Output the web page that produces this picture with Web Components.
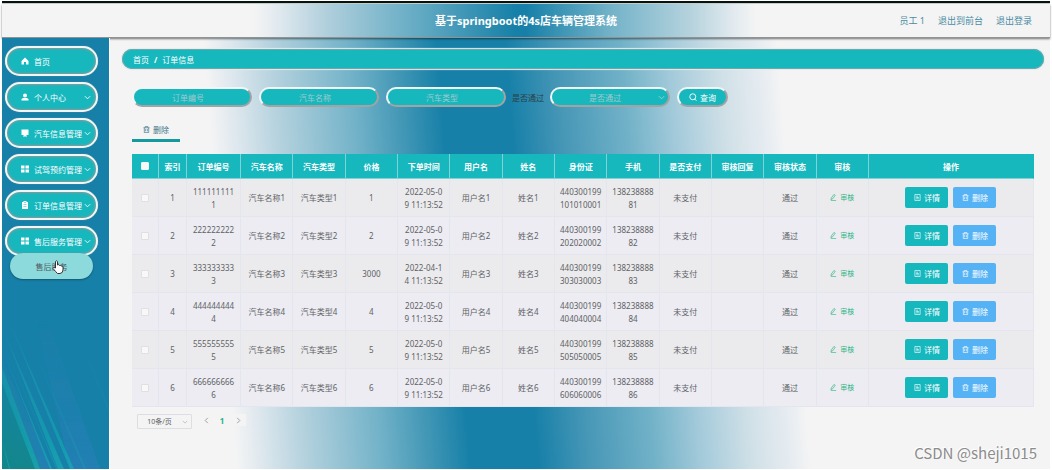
<!DOCTYPE html>
<html lang="zh-CN">
<head>
<meta charset="utf-8">
<title>基于springboot的4s店车辆管理系统</title>
<style>
  html, body { margin: 0; }
  body {
    background: #fff;
    color: #606266;
    font: 8px/13px "Noto Sans", "Noto Sans CJK SC", sans-serif;
    --teal: #17b7be;
    --blue: #1780a8;
    --page: #f4f4f4;
  }
</style>
</head>
<body>
<app-shell>
  <app-header slot="header" heading="基于springboot的4s店车辆管理系统"></app-header>
  <side-menu slot="side">
    <menu-item icon="home">首页</menu-item>
    <menu-item icon="user" expandable>个人中心</menu-item>
    <menu-item icon="monitor" expandable>汽车信息管理</menu-item>
    <menu-item icon="grid" expandable>试驾预约管理</menu-item>
    <menu-item icon="clipboard" expandable>订单信息管理</menu-item>
    <menu-item icon="grid" expandable>售后服务管理</menu-item>
    <sub-item>售后服务</sub-item>
  </side-menu>
  <bread-crumb current="订单信息">首页</bread-crumb>
  <filter-bar></filter-bar>
  <tool-tabs>删除</tool-tabs>
  <order-table></order-table>
  <page-nav></page-nav>
  <water-mark slot="mark">CSDN @sheji1015</water-mark>
</app-shell>

<script>
const ICONS = {
  home: '<path fill="currentColor" d="M8 1 1 8v7h5v-5h4v5h5V8z"/>',
  user: '<circle fill="currentColor" cx="8" cy="5" r="4"/><path fill="currentColor" d="M1 15v-2q0-3 4-3h6q4 0 4 3v2z"/>',
  monitor: '<path fill="currentColor" d="M1 1h14v11H1zM6 12h4v1h2v2H4v-2h2z"/>',
  grid: '<path fill="currentColor" d="M0 1h7v6H0zM9 1h7v6H9zM0 9h7v6H0zM9 9h7v6H9z"/>',
  clipboard: '<path fill="currentColor" fill-rule="evenodd" d="M2 2h3V0h6v2h3v14H2zM6 2v1h4V2zM5 7v1h6V7zM5 10v1h6v-1z"/>',
  down: '<path fill="none" stroke="currentColor" stroke-width="2" d="m2 5 6 6 6-6"/>',
  left: '<path fill="none" stroke="currentColor" stroke-width="2" d="m11 2-6 6 6 6"/>',
  right: '<path fill="none" stroke="currentColor" stroke-width="2" d="m5 2 6 6-6 6"/>',
  search: '<g fill="none" stroke="currentColor" stroke-width="1.8"><circle cx="7.500" cy="7.500" r="6"/><path d="m11 12 4 3"/></g>',
  trash: '<path fill="none" stroke="currentColor" stroke-width="1.500" d="M1 4h14M5 4V1h6v3M3 4v11h10V4M6 7v5M10 7v5"/>',
  doc: '<path fill="none" stroke="currentColor" stroke-width="1.500" d="M2 1h12v14H2zM5 5h4M5 8h6M5 11h6"/>',
  edit: '<path fill="none" stroke="currentColor" stroke-width="1.500" d="m3 9 6-8 3 2-6 8-4 2zM2 15h12"/>'
};
const icon = (name, size = 8) =>
  `<svg class="i" width="${size}" height="${size}" viewBox="0 0 16 16" aria-hidden="true">${ICONS[name]}</svg>`;

const BASE = `
  :host { display: block; box-sizing: border-box; }
  *, *::before { box-sizing: border-box; }
  .i { flex: none; display: block; }
  button, input, select { font: inherit; color: inherit; margin: 0; padding: 0; border: 0; background: none; appearance: none; outline: 0; }
  button { cursor: pointer; display: flex; align-items: center; justify-content: center; }
  a { color: inherit; text-decoration: none; }
`;

function define(name, css, html) {
  customElements.define(name, class extends HTMLElement {
    constructor() {
      super();
      this.attachShadow({ mode: 'open' });
    }
    connectedCallback() {
      this.shadowRoot.innerHTML =
        `<style>${BASE}${css}</style>` + (typeof html === 'function' ? html(this) : html);
    }
  });
}

define('app-shell', `
  :host { position: relative; min-height: 100vh; padding: 1px 2px; display: flex; flex-direction: column; }
  .strip { height: 3px; background: #08120e; border-bottom: 1px solid #c9d6d2; }
  .body { flex: 1; display: grid; grid-template-columns: 108px minmax(0, 1fr); }
  main {
    padding: 11px 6px 0 12px;
    background: linear-gradient(85.5deg, var(--page) 13%, #e4ebf0 15%, #b5d2de 20%, #72b2c8 28%, #4096b5 33%, var(--blue) 37%,
      var(--blue) 44%, #4596b6 49%, #72b2c8 56%, #a5cbdb 61%, #d0e0e7 66%, #e6ecf1 70%, var(--page) 72%);
  }
`, `<div class="strip"></div><slot name="header"></slot>
  <div class="body"><slot name="side"></slot><main><slot></slot></main></div><slot name="mark"></slot>`);

define('app-header', `
  :host {
    position: relative; height: 34px; display: grid; grid-template-columns: 1fr auto 1fr; align-items: center;
    padding: 0 18px; border-bottom: 1px solid #8e9496; box-shadow: 0 1px 2px #0008;
    background: linear-gradient(90deg, var(--page) 24%, #e4ebf0 26%, #b0cfdc 31%, #72b2c8 38%, var(--blue) 49%,
      var(--blue) 50%, #72b2c8 58%, #b8d4de 66%, #e4ebf0 70%, var(--page) 72%);
  }
  h1 { grid-column: 2; margin: 0; font-size: 11px; line-height: 16px; font-weight: 700; color: #fff; }
  nav { display: flex; justify-content: flex-end; gap: 13px; font-size: 9px; color: #4a8ba3; }
`, el => `<h1>${el.getAttribute('heading')}</h1>
  <nav><span>员工 1</span><a href="#front">退出到前台</a><a href="#logout">退出登录</a></nav>`);

define('side-menu', `
  :host { position: relative; background: var(--blue); border-right: 1px solid #fff; padding: 8px 11px 0 3px; }
  nav { position: relative; display: flex; flex-direction: column; gap: 6px; }
  .rays { position: absolute; left: 0; bottom: 0; width: 100%; height: 170px; }
  .hand { position: absolute; left: 50px; top: 222px; }
`, `<svg class="rays" viewBox="0 0 107 170" preserveAspectRatio="none" aria-hidden="true">
    <defs>
      <linearGradient id="g" gradientUnits="userSpaceOnUse" x1="0" y1="0" x2="0" y2="170"><stop offset="0" stop-color="#14a4ae" stop-opacity=".1"/><stop offset="1" stop-color="#17a9b4" stop-opacity=".75"/></linearGradient>
      <linearGradient id="b" gradientUnits="userSpaceOnUse" x1="0" y1="0" x2="0" y2="170"><stop offset="0" stop-color="#1f80b0" stop-opacity="0"/><stop offset="1" stop-color="#257fb6" stop-opacity=".8"/></linearGradient>
      <linearGradient id="n" gradientUnits="userSpaceOnUse" x1="40" y1="60" x2="0" y2="170"><stop offset="0" stop-color="#118c90" stop-opacity="0"/><stop offset="1" stop-color="#12868a"/></linearGradient>
      <filter id="s"><feGaussianBlur stdDeviation=".6"/></filter>
    </defs>
    <path fill="url(#n)" d="M0 60 42 170H0z"/>
    <g filter="url(#s)">
      <path fill="url(#b)" d="M34 20 44 16 98 170H68z"/>
      <path fill="url(#b)" d="M0 60 50 170H38L0 80z"/>
      <path fill="url(#g)" d="M0 68 38 170h-5L0 84zM2 10 72 170h-4zM0 28 62 170h-6zM0 50 50 170h-2zM0 140 8 170H7z"/>
      <path fill="url(#g)" opacity=".4" d="M10 0 84 170h-2zM70 20 107 110v3zM0 40 56 170h-2z"/>
    </g>
  </svg>
  <nav><slot></slot></nav>
  <svg class="hand" width="12" height="14" viewBox="0 0 12 14" aria-hidden="true">
    <path fill="#fff" stroke="#333" d="M3.500 8V1.500q1-1.500 2 0V5q1-1 2 .5 1-.8 1.600.5 1.900-.5 1.900 1v3q0 3-3 3.500H5.500Q4 12 1 8.500q0-2 2.500-.5z"/>
  </svg>`);

define('menu-item', `
  a {
    height: 30px; display: flex; align-items: center; gap: 5px; padding: 0 5px 0 14px;
    border: 2px solid #f3f5f5; border-radius: 15px; background: var(--teal); color: #fff;
    box-shadow: inset 0 0 2px 1px #8a9a9a, 0 0 1px #8aa;
  }
  span { flex: 1; white-space: nowrap; }
  span + .i { margin-left: -3px; }
`, el => `<a href="#menu">${icon(el.getAttribute('icon'))}<span><slot></slot></span>${el.hasAttribute('expandable') ? icon('down', 7) : ''}</a>`);

define('sub-item', `
  :host { margin: -9px 5px 0; position: relative; }
  a {
    display: flex; align-items: center; justify-content: center; height: 26px; border-radius: 13px;
    background: #8cdadb; color: #4d5b5e; box-shadow: 0 1px 2px #0005;
  }
`, `<a href="#after-sale"><slot></slot></a>`);

define('bread-crumb', `
  nav {
    height: 20px; display: flex; align-items: center; gap: 5px; padding: 0 11px; border-radius: 10px;
    background: var(--teal); color: #fff; box-shadow: inset 0 0 0 1px #6ba9ac, 0 0 1px 1px #e6ecec;
  }
`, el => `<nav aria-label="路径"><a href="#home"><slot></slot></a><b>/</b><span>${el.getAttribute('current')}</span></nav>`);

define('filter-bar', `
  :host { margin: 18px 10px 0; }
  form { display: flex; align-items: center; gap: 7px; }
  input, select, button {
    height: 20px; border-radius: 10px; border: 2px solid; border-color: #f4f6f6 #a3a3a3 #a3a3a3 #f4f6f6; background: var(--teal);
  }
  input, .pick { width: 120px; }
  input { text-align: center; padding-right: 8px; }
  input::placeholder, select { color: #a3c9ca; opacity: 1; }
  .pick { position: relative; display: flex; }
  select { width: 100%; padding-right: 10px; text-align: center; text-align-last: center; }
  .pick .i { position: absolute; right: 5px; top: 7px; color: #a3d5d6; }
  label { color: #2b3f48; margin: 0 -1px; }
  button { width: 51px; gap: 3px; color: #fff; }
`, `<form onsubmit="return false">
    <input aria-label="订单编号" placeholder="订单编号">
    <input aria-label="汽车名称" placeholder="汽车名称">
    <input aria-label="汽车类型" placeholder="汽车类型">
    <label for="pass">是否通过</label>
    <div class="pick"><select id="pass"><option>是否通过</option><option>通过</option><option>未通过</option></select>${icon('down', 7)}</div>
    <button type="submit">${icon('search')}查询</button>
  </form>`);

define('tool-tabs', `
  :host { margin: 13px 10px 0; }
  button { width: 48px; height: 22px; padding-bottom: 1px; gap: 3px; border-bottom: 3px solid #14999f; color: #3c7488; }
`, `<button type="button">${icon('trash', 7)}<slot></slot></button>`);

const HEADS = ['索引', '订单编号', '汽车名称', '汽车类型', '价格', '下单时间', '用户名', '姓名', '身份证', '手机', '是否支付', '审核回复', '审核状态', '审核', '操作'];
const PRICES = [1, 2, 3000, 4, 5, 6];
const row = n => {
  const day = n === 3 ? '2022-04-14' : '2022-05-09';
  const cells = [n, String(n).repeat(10), '汽车名称' + n, '汽车类型' + n, PRICES[n - 1], day + ' 11:13:52', '用户名' + n, '姓名' + n,
    '440300199' + `${n}0`.repeat(3) + '00' + n, '1382388888' + n, '未支付', '', '通过'];
  return `<tr><td><input type="checkbox" aria-label="选择第${n}行"></td>
    ${cells.map((c, i) => `<td${i === 5 ? ' class="time"' : ''}>${c}</td>`).join('')}
    <td><button type="button" class="audit">${icon('edit', 7)}审核</button></td>
    <td><div class="ops"><button type="button" class="detail">${icon('doc', 7)}详情</button><button type="button" class="del">${icon('trash', 7)}删除</button></div></td></tr>`;
};
define('order-table', `
  :host { margin: 12px 10px 0; }
  table { width: 100%; table-layout: fixed; border-collapse: separate; border-spacing: 0; text-align: center; }
  .c1 { width: 3%; } .c2 { width: 3.1%; } .c3 { width: 6%; } .cn { width: 5.8%; }
  th, td { padding: 0 4px; word-break: break-all; border-right: 1px solid #e3e5ef; border-bottom: 1px solid #e3e5ef; }
  th { height: 25px; background: var(--teal); color: #fff; border-color: #7fd3d7; }
  th:last-child { border-right-color: var(--teal); }
  td { height: 38px; background: #ebebed; }
  tr:nth-child(even) td { background: #ececf2; }
  .time { padding: 0 6px; }
  input { display: block; width: 8px; height: 8px; margin: 0 auto; background: #f8f8f8; border: 1px solid #e0e0e3; border-radius: 1px; }
  th input { border-color: #eef6f6; }
  .audit { margin: 0 auto; gap: 3px; font-size: 7px; color: #2db585; }
  .ops { display: flex; justify-content: center; gap: 5px; }
  .ops button { width: 43px; height: 21px; gap: 3px; border-radius: 2px; color: #fff; }
  .detail { background: var(--teal); }
  .del { background: #54b2f5; }
`, `<table>
    <colgroup><col class="c1"><col class="c2"><col class="c3"><col class="cn" span="12"><col></colgroup>
    <thead><tr><th><input type="checkbox" aria-label="全选"></th>${HEADS.map(h => `<th>${h}</th>`).join('')}</tr></thead>
    <tbody>${[1, 2, 3, 4, 5, 6].map(row).join('')}</tbody>
  </table>`);

define('page-nav', `
  :host { display: flex; align-items: flex-start; gap: 6px; margin: 7px 15px 0; }
  .size { position: relative; width: 55px; height: 15px; display: flex; }
  select { width: 100%; padding-right: 10px; text-align: center; text-align-last: center; font-size: 7px; border: 1px solid #dcdfe2; border-radius: 1px; background: var(--page); }
  .size .i { position: absolute; right: 4px; top: 5px; color: #b4b8be; }
  nav { display: flex; }
  nav button { width: 16px; height: 12px; color: #8f959d; background: var(--page); }
  nav [aria-current] { color: #25b08c; font-weight: 700; }
`, `<div class="size"><select aria-label="每页条数"><option>10条/页</option><option>20条/页</option></select>${icon('down', 6)}</div>
  <nav aria-label="分页"><button type="button" aria-label="上一页">${icon('left', 7)}</button><button type="button" aria-current="page">1</button><button type="button" aria-label="下一页">${icon('right', 7)}</button></nav>`);

define('water-mark', `
  :host { position: absolute; right: 15px; bottom: 6px; font: 15px/22px "Noto Sans CJK SC", sans-serif; color: #8c8c8c; text-shadow: -1px -1px #fff; }
`, `<slot></slot>`);
</script>
</body>
</html>
